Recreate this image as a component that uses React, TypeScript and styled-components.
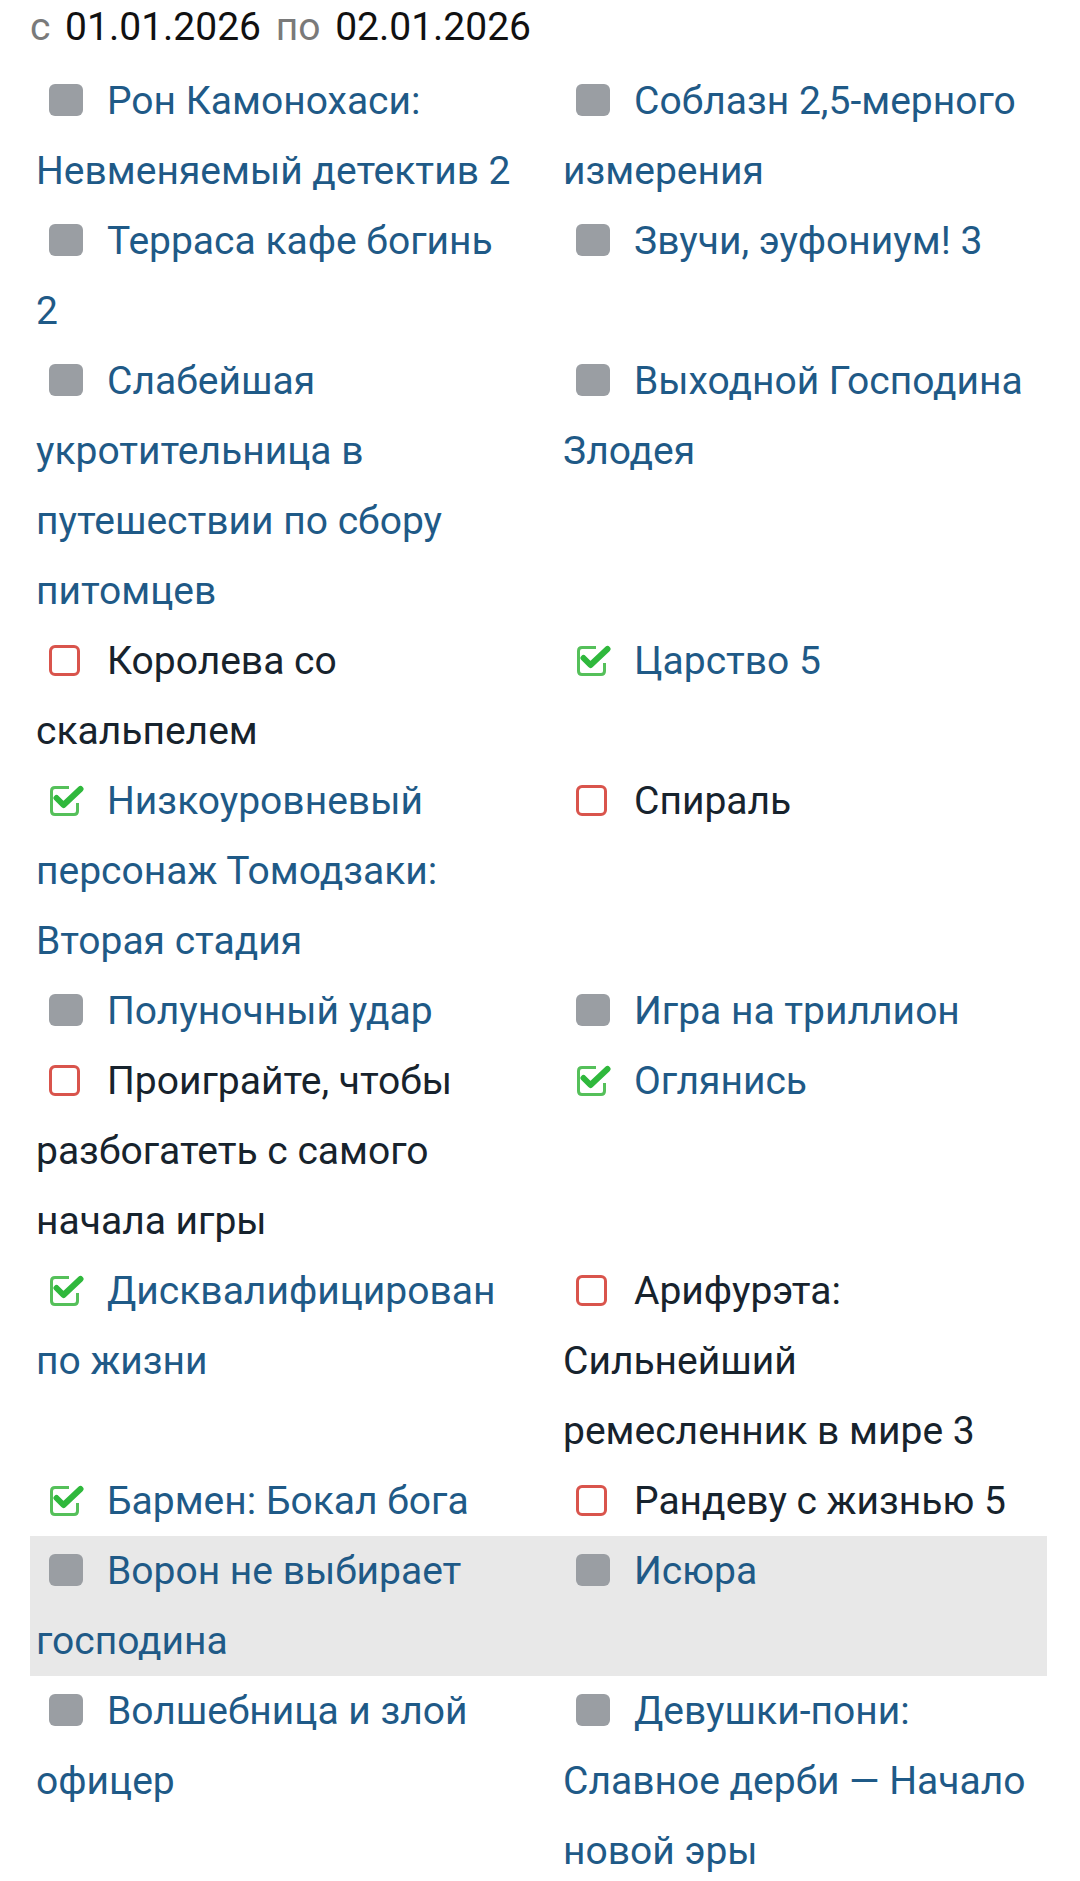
import React from 'react';
import styled, { createGlobalStyle } from 'styled-components';

const GlobalStyle = createGlobalStyle`
    html, body {
        margin: 0;
        padding: 0;
        background: #ffffff;
    }
    body {
        font-family: Roboto, "Noto Sans", "Liberation Sans", sans-serif;
    }
`;

const PageDiv = styled.div`
    width: 1080px;
    box-sizing: border-box;
    padding: 0 33px 0 30px;
`;

const DateLine = styled.div`
    font-size: 39px;
    line-height: 54px;
    margin-bottom: 12px;
    color: #111111;
`;

const DateLabel = styled.span`
    color: #7a7a7a;
    margin: 0 5px;

    &:first-child {
        margin-left: 0;
    }
`;

const GridDiv = styled.div`
    display: grid;
    grid-template-columns: 527px 1fr;
`;

const RowDiv = styled.div<{ $highlight?: boolean }>`
    display: contents;

    & > div {
        background-color: ${props => (props.$highlight ? '#e8e8e8' : 'transparent')};
    }
`;

const CellDiv = styled.div<{ $first: boolean }>`
    padding: 0 ${props => (props.$first ? '40px' : '6px')} 0 6px;
    font-size: 39px;
    line-height: 70px;
`;

type Status = 'none' | 'todo' | 'done';

const ItemText = styled.span<{ $link: boolean }>`
    color: ${props => (props.$link ? '#1f5a87' : '#17232d')};
`;

const IconBox = styled.span`
    display: inline-block;
    width: 36px;
    height: 34px;
    margin-left: 12px;
    margin-right: 23px;
    vertical-align: -3px;

    svg {
        display: block;
    }
`;

function StatusIcon({ status }: { status: Status }) {
    if (status === 'none') {
        return (
            <IconBox>
                <svg width='36' height='34' viewBox='0 0 36 34'>
                    <rect x='1' y='1' width='34' height='32' rx='6' fill='#9a9ea3' />
                </svg>
            </IconBox>
        );
    }
    if (status === 'todo') {
        return (
            <IconBox>
                <svg width='36' height='34' viewBox='0 0 36 34'>
                    <rect x='2.5' y='3.5' width='28' height='28' rx='4.5' fill='none' stroke='#d9544c' strokeWidth='3' />
                </svg>
            </IconBox>
        );
    }
    return (
        <IconBox>
            <svg width='36' height='34' viewBox='0 0 36 34'>
                <path d='M21 4.5 H7 Q3.5 4.5 3.5 8 V28 Q3.5 31.5 7 31.5 H26 Q29.5 31.5 29.5 28 V20' fill='none' stroke='#55c05a' strokeWidth='3' />
                <path d='M8.5 15 L15.5 22 L32.5 6' fill='none' stroke='#2fb83c' strokeWidth='6' strokeLinecap='round' strokeLinejoin='round' />
            </svg>
        </IconBox>
    );
}

interface Item {
    title: string;
    status: Status;
}

const rows: { items: [Item, Item]; highlight?: boolean }[] = [
    { items: [
        { title: 'Рон Камонохаси: Невменяемый детектив 2', status: 'none' },
        { title: 'Соблазн 2,5-мерного измерения', status: 'none' },
    ] },
    { items: [
        { title: 'Терраса кафе богинь 2', status: 'none' },
        { title: 'Звучи, эуфониум! 3', status: 'none' },
    ] },
    { items: [
        { title: 'Слабейшая укротительница в путешествии по сбору питомцев', status: 'none' },
        { title: 'Выходной Господина Злодея', status: 'none' },
    ] },
    { items: [
        { title: 'Королева со скальпелем', status: 'todo' },
        { title: 'Царство 5', status: 'done' },
    ] },
    { items: [
        { title: 'Низкоуровневый персонаж Томодзаки: Вторая стадия', status: 'done' },
        { title: 'Спираль', status: 'todo' },
    ] },
    { items: [
        { title: 'Полуночный удар', status: 'none' },
        { title: 'Игра на триллион', status: 'none' },
    ] },
    { items: [
        { title: 'Проиграйте, чтобы разбогатеть с самого начала игры', status: 'todo' },
        { title: 'Оглянись', status: 'done' },
    ] },
    { items: [
        { title: 'Дисквалифицирован по жизни', status: 'done' },
        { title: 'Арифурэта: Сильнейший ремесленник в мире 3', status: 'todo' },
    ] },
    { items: [
        { title: 'Бармен: Бокал бога', status: 'done' },
        { title: 'Рандеву с жизнью 5', status: 'todo' },
    ] },
    { items: [
        { title: 'Ворон не выбирает господина', status: 'none' },
        { title: 'Исюра', status: 'none' },
    ], highlight: true },
    { items: [
        { title: 'Волшебница и злой офицер', status: 'none' },
        { title: 'Девушки-пони: Славное дерби — Начало новой эры', status: 'none' },
    ] },
];

function App(): JSX.Element {
    return (
        <PageDiv>
            <GlobalStyle />
            <DateLine>
                <DateLabel>с</DateLabel> 01.01.2026 <DateLabel>по</DateLabel> 02.01.2026
            </DateLine>
            <GridDiv>
                {rows.map((row, i) => (
                    <RowDiv key={i} $highlight={row.highlight}>
                        {row.items.map((item, j) => (
                            <CellDiv key={j} $first={j === 0}>
                                <StatusIcon status={item.status} />
                                <ItemText $link={item.status !== 'todo'}>{item.title}</ItemText>
                            </CellDiv>
                        ))}
                    </RowDiv>
                ))}
            </GridDiv>
        </PageDiv>
    );
}

export default App;
